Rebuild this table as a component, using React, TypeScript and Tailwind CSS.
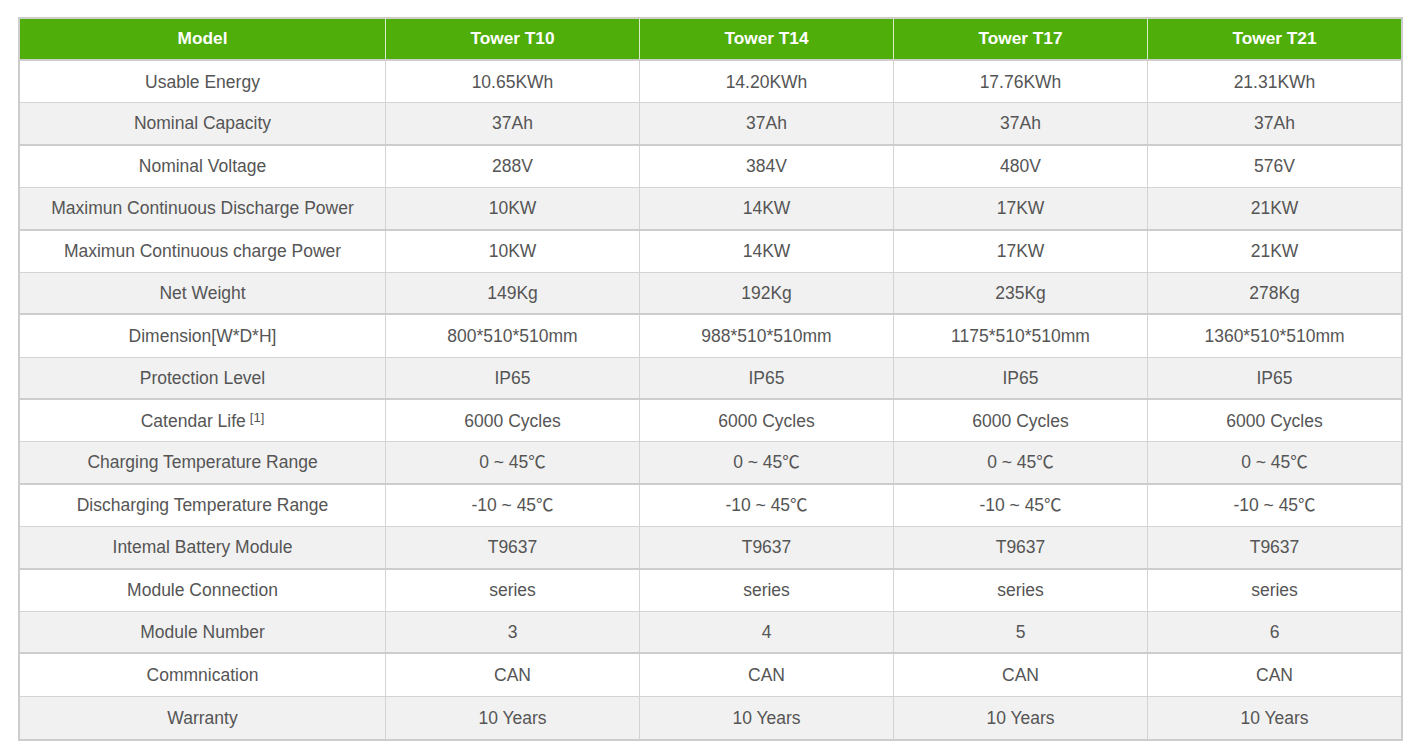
const models = ['Tower T10', 'Tower T14', 'Tower T17', 'Tower T21'];

type Row = { label: string; sup?: string; values: string[] };

const rows: Row[] = [
  { label: 'Usable Energy', values: ['10.65KWh', '14.20KWh', '17.76KWh', '21.31KWh'] },
  { label: 'Nominal Capacity', values: ['37Ah', '37Ah', '37Ah', '37Ah'] },
  { label: 'Nominal Voltage', values: ['288V', '384V', '480V', '576V'] },
  { label: 'Maximun Continuous Discharge Power', values: ['10KW', '14KW', '17KW', '21KW'] },
  { label: 'Maximun Continuous charge Power', values: ['10KW', '14KW', '17KW', '21KW'] },
  { label: 'Net Weight', values: ['149Kg', '192Kg', '235Kg', '278Kg'] },
  { label: 'Dimension[W*D*H]', values: ['800*510*510mm', '988*510*510mm', '1175*510*510mm', '1360*510*510mm'] },
  { label: 'Protection Level', values: ['IP65', 'IP65', 'IP65', 'IP65'] },
  { label: 'Catendar Life', sup: '[1]', values: ['6000 Cycles', '6000 Cycles', '6000 Cycles', '6000 Cycles'] },
  { label: 'Charging Temperature Range', values: ['0 ~ 45℃', '0 ~ 45℃', '0 ~ 45℃', '0 ~ 45℃'] },
  { label: 'Discharging Temperature Range', values: ['-10 ~ 45℃', '-10 ~ 45℃', '-10 ~ 45℃', '-10 ~ 45℃'] },
  { label: 'Intemal Battery Module', values: ['T9637', 'T9637', 'T9637', 'T9637'] },
  { label: 'Module Connection', values: ['series', 'series', 'series', 'series'] },
  { label: 'Module Number', values: ['3', '4', '5', '6'] },
  { label: 'Commnication', values: ['CAN', 'CAN', 'CAN', 'CAN'] },
  { label: 'Warranty', values: ['10 Years', '10 Years', '10 Years', '10 Years'] }
];

const cols = 'grid grid-cols-[365px_254px_254px_254px_254px]';

export default function App() {
  return (
    <div className="min-h-[745px] w-[1411px] bg-white pt-[17px] font-['Liberation_Sans',Arial,'Noto_Sans_CJK_SC',sans-serif]">
      <div className="ml-[18px] w-[1385px] border-2 border-[#cdcdcd]">
        <div className={`${cols} h-[42px] border-b-2 border-[#cdcdcd] bg-[#4fae0a] text-[17.3px] font-bold text-white`}>
          <div className="flex items-center justify-center">Model</div>
          {models.map((m) => (
            <div key={m} className="flex items-center justify-center border-l border-[#d8ecc8]">
              {m}
            </div>
          ))}
        </div>
        {rows.map((row, index) => {
          const gray = index % 2 === 1;
          const last = index === rows.length - 1;
          return (
            <div
              key={row.label}
              className={`${cols} h-[42.375px] text-[17.5px] text-[#555] ${gray ? 'bg-[#f1f1f1]' : 'bg-white'} ${last ? '' : gray ? 'border-b-2 border-[#cdcdcd]' : 'border-b border-[#d4d4d4]'}`}
            >
              <div className="flex items-center justify-center">
                {row.label}
                {row.sup && <sup className="relative -top-[3px] ml-1 text-[13px]">{row.sup}</sup>}
              </div>
              {row.values.map((v, i) => (
                <div key={i} className="flex items-center justify-center whitespace-pre border-l border-[#d4d4d4]">
                  {v}
                </div>
              ))}
            </div>
          );
        })}
      </div>
    </div>
  );
}
